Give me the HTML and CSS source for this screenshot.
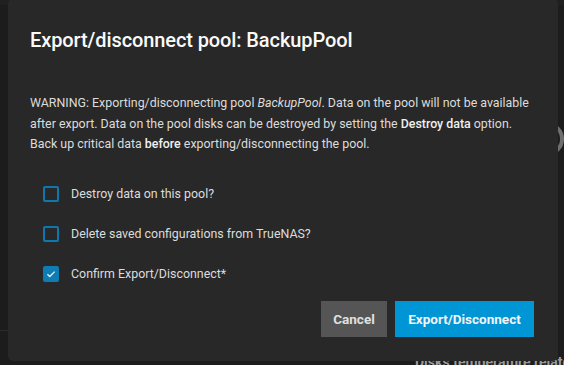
FILE: index.html
```html
<!DOCTYPE html>
<html lang="en">
<head>
    <meta charset="UTF-8">
    <title>Export/disconnect pool</title>
    <link rel="stylesheet" href="styles.css">
</head>
<body>

<div class="backdrop">
    <div class="topline"></div>
    <div class="arc"></div>
    <div class="midline"></div>
    <div class="behind-title">Disks temperature related alerts</div>
</div>

<div class="dialog">
    <h1>Export/disconnect pool: BackupPool</h1>

    <p class="warning">WARNING: Exporting/disconnecting pool <em>BackupPool</em>. Data on the pool will not be available after export. Data on the pool disks can be destroyed by setting the <b>Destroy data</b> option. Back up critical data <b>before</b> exporting/disconnecting the pool.</p>

    <div class="options">
        <label class="check">
            <span class="box"></span>
            <span>Destroy data on this pool?</span>
        </label>
        <label class="check">
            <span class="box"></span>
            <span>Delete saved configurations from TrueNAS?</span>
        </label>
        <label class="check">
            <span class="box checked">
                <svg viewBox="0 0 16 16" width="16" height="16"><path d="M3.2 8.2 L6.4 11.3 L12.8 4.8" fill="none" stroke="#e8f2f8" stroke-width="1.8"/></svg>
            </span>
            <span>Confirm Export/Disconnect*</span>
        </label>
    </div>

    <div class="actions">
        <button class="btn cancel">Cancel</button>
        <button class="btn primary">Export/Disconnect</button>
    </div>
</div>

</body>
</html>
```

FILE: styles.css
```css
body {
    margin: 0;
    width: 564px;
    height: 365px;
    overflow: hidden;
    background: #1c1c1c;
    font-family: Roboto, Arial, sans-serif;
    position: relative;
}

.backdrop {
    position: absolute;
    inset: 0;
    overflow: hidden;
}

.topline {
    position: absolute;
    left: 0;
    top: 0;
    width: 564px;
    height: 5px;
    background: #202020;
}

.midline {
    position: absolute;
    left: 0;
    top: 330px;
    width: 20px;
    height: 1px;
    background: #2a2a2a;
}

.arc {
    position: absolute;
    left: 530px;
    top: 122px;
    width: 26px;
    height: 26px;
    border: 4px solid #6e6e6e;
    border-radius: 50%;
}

.behind-title {
    position: absolute;
    left: 415px;
    top: 354px;
    width: 149px;
    overflow: hidden;
    font-weight: 700;
    font-size: 14px;
    color: #9a9a9a;
    white-space: nowrap;
}

.dialog {
    position: absolute;
    left: 8px;
    top: -1px;
    width: 550px;
    height: 362px;
    box-sizing: border-box;
    background: #282828;
    border-radius: 5px;
    padding: 28px 24px 0 22px;
    color: #e2e2e2;
}

h1 {
    margin: 0;
    font-weight: 500;
    font-size: 20px;
    line-height: 26px;
    color: #fafafa;
    letter-spacing: -0.1px;
}

.warning {
    margin: 40px 0 0;
    font-size: 12.4px;
    line-height: 20.5px;
    color: #dcdcdc;
}

.warning b {
    font-weight: 500;
    color: #f0f0f0;
}

.options {
    margin-top: 29px;
    padding-left: 13px;
    display: flex;
    flex-direction: column;
    gap: 20px;
}

.check {
    display: flex;
    align-items: center;
    gap: 12px;
    height: 20px;
    font-size: 12.4px;
    color: #dcdcdc;
}

.box {
    width: 16px;
    height: 16px;
    box-sizing: border-box;
    border: 2px solid #0e77ad;
    border-radius: 2px;
    display: flex;
    align-items: center;
    justify-content: center;
}

.box.checked {
    background: #0f7cb4;
    border-color: #0f7cb4;
}

.box svg {
    display: block;
}

.actions {
    margin-top: 17px;
    display: flex;
    justify-content: flex-end;
    gap: 8px;
}

.btn {
    height: 36px;
    border: none;
    font-family: Roboto, sans-serif;
    font-weight: 700;
    font-size: 13.5px;
    color: #f4f4f4;
    padding: 0 8px;
    cursor: pointer;
}

.cancel {
    width: 66px;
    background: #555555;
    color: #e0e0e0;
}

.primary {
    width: 139px;
    background: #0095d5;
}
```
